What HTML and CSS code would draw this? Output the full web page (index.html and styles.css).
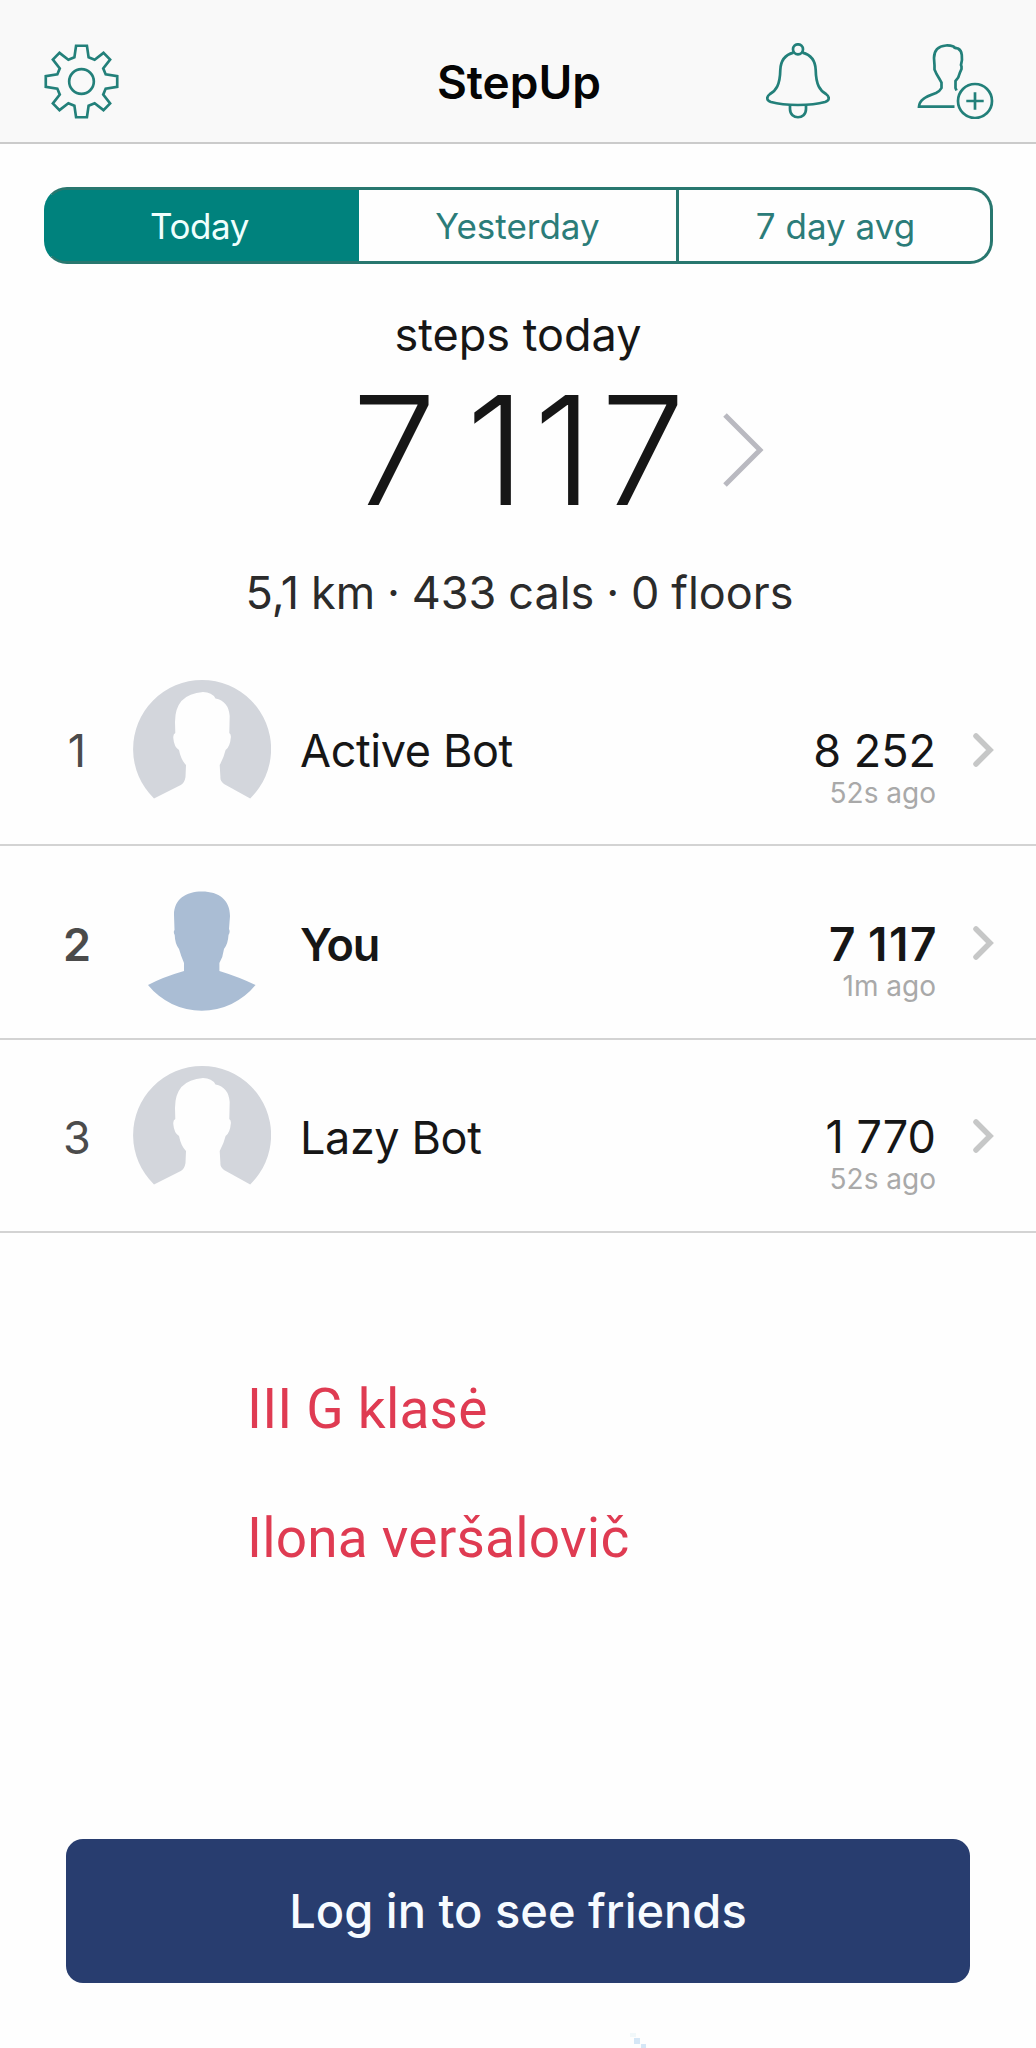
FILE: index.html
```
<!DOCTYPE html>
<html lang="en">
<head>
    <meta charset="UTF-8">
    <meta name="viewport" content="width=device-width, initial-scale=1.0">
    <title>StepUp</title>
    <link rel="stylesheet" href="styles.css">
</head>
<body>

<svg class="defs" width="0" height="0">
    <symbol id="bot" viewBox="0 0 138 138">
        <path d="M21 118.5 A69 69 0 1 1 117.2 118.5 L91 104 Q87 101 87.4 97 L86.7 85 Q91 77 92.6 70 Q97 67 97.9 57 Q98 54 96.3 53 L96.7 36 Q95.5 21 82.5 18.5 Q79 12 70 12 Q42 14 42 42 L42.3 53 Q40 54 40.3 58 Q41 67 46 70 Q48 80 53 85 L52.5 97 Q51.5 103 47.8 105 Z"/>
    </symbol>
    <symbol id="arrow" viewBox="0 0 24 38">
        <path d="M5 5 L19 19 L5 33"/>
    </symbol>
</svg>

<header class="topbar">
    <svg class="icon gear" viewBox="-38 -38 76 76">
        <path d="M-5.5 -36.2H5.5L7.2 -24.5L13.3 -22L22.3 -29L29 -22.3L22 -13.3L24.5 -7.2L36.2 -5.5V5.5L24.5 7.2L22 13.3L29 22.3L22.3 29L13.3 22L7.2 24.5L5.5 36.2H-5.5L-7.2 24.5L-13.3 22L-22.3 29L-29 22.3L-22 13.3L-24.5 7.2L-36.2 5.5V-5.5L-24.5 -7.2L-22 -13.3L-29 -22.3L-22.3 -29L-13.3 -22L-7.2 -24.5Z"/>
        <circle r="12.5"/>
    </svg>
    <h1>StepUp</h1>
    <div class="actions">
        <svg class="icon bell" viewBox="0 0 64 76">
            <circle cx="32" cy="6.3" r="5"/>
            <path d="M27.5 9.6C18 12 14.6 19 14.3 27C14 42 10 47.5 4 51C0 54 .5 57.5 5 59C19 63 45 63 59 59C63.5 57.5 64 54 60 51C54 47.5 50 42 49.7 27C49.4 19 46 12 36.5 9.6"/>
            <path d="M24 62V66C24 77 40 77 40 66V62"/>
        </svg>
        <svg class="icon person" viewBox="0 0 77 76">
            <path d="M39.5 47.5L38.5 45V38Q42 34.5 42.8 30L44.5 26V23.5L44 22Q45.5 17 44.8 12Q44.5 7.5 41 5.5Q37 5 36.5 3.5Q33 2.3 29 2.5Q17 3.5 17 15L17.5 22.5V26.5L19.5 31L22.5 36L24.5 39.5V45Q23 48 19 50Q9 53.5 6.3 56Q2.3 59 2 63.7H37.5"/>
            <circle cx="58" cy="58" r="17"/>
            <path d="M49.3 58H66.7M58 49.3V66.7"/>
        </svg>
    </div>
</header>

<nav class="tabs">
    <button class="tab active">Today</button>
    <button class="tab">Yesterday</button>
    <button class="tab">7 day avg</button>
</nav>

<section class="summary">
    <p class="label">steps today</p>
    <div class="count">
        <span class="steps">7 117</span>
        <svg class="more" viewBox="0 0 44 76"><path d="M3 3L38 38L3 73"/></svg>
    </div>
    <p class="stats">5,1 km · 433 cals · 0 floors</p>
</section>

<ul class="board">
    <li class="row">
        <span class="rank">1</span>
        <svg class="avatar"><use href="#bot"/></svg>
        <span class="name">Active Bot</span>
        <div class="score"><b>8 252</b><small>52s ago</small></div>
        <svg class="arrow"><use href="#arrow"/></svg>
    </li>
    <li class="row you">
        <span class="rank">2</span>
        <svg class="avatar" viewBox="0 0 138 138">
            <path d="M15 112Q30 104 51 98V90Q48 83 46 76Q42 71 41.7 62Q40 59 41.5 57L41 42C41 26 53 18.5 69 18.5C86 18.5 97 27 97 43L96 56Q97.5 59 95.5 62Q95 71 91 76Q90 84 86.4 90V98Q106 104 122.5 112A69 69 0 0 1 15 112Z"/>
        </svg>
        <span class="name">You</span>
        <div class="score"><b>7 117</b><small>1m ago</small></div>
        <svg class="arrow"><use href="#arrow"/></svg>
    </li>
    <li class="row">
        <span class="rank">3</span>
        <svg class="avatar"><use href="#bot"/></svg>
        <span class="name">Lazy Bot</span>
        <div class="score"><b>1 770</b><small>52s ago</small></div>
        <svg class="arrow"><use href="#arrow"/></svg>
    </li>
</ul>

<div class="note">
    <p>III G klasė</p>
    <p>Ilona veršalovič</p>
</div>

<button class="login">Log in to see friends</button>

<svg class="spark" viewBox="0 0 20 16">
    <path class="faint" d="M1 1h6v4h-6z"/>
    <path d="M5 6h6v6h-6zM12 12h5v4h-5z"/>
</svg>

</body>
</html>
```

FILE: styles.css
```
* {
    box-sizing: border-box;
}

body {
    margin: 0;
    width: 1036px;
    height: 2048px;
    overflow: hidden;
    display: flex;
    flex-direction: column;
    background: #fefefe;
    color: #161616;
    font-family: Inter, "Liberation Sans", sans-serif;
    font-size: 45px;
}

h1, p, ul {
    margin: 0;
    padding: 0;
    font-weight: 400;
}

button {
    border: none;
    padding: 0;
    background: none;
    font-family: inherit;
}

.defs {
    position: absolute;
}

/* top bar */
.topbar {
    height: 144px;
    flex: none;
    display: grid;
    grid-template-columns: 1fr auto 1fr;
    align-items: center;
    padding: 20px 42px 0 44px;
    background: #f9f9f9;
    border-bottom: 2px solid #cbcbcb;
}

.topbar h1 {
    padding-top: 2px;
    font-size: 46px;
    font-weight: 600;
    line-height: 60px;
    color: #050505;
}

.icon {
    fill: none;
    stroke: #23807a;
    stroke-width: 2.7;
    display: block;
}

.gear {
    width: 75px;
    height: 75px;
}

.actions {
    display: flex;
    justify-content: flex-end;
    gap: 87px;
}

.bell {
    width: 64px;
    height: 76px;
}

.person {
    width: 77px;
    height: 76px;
}

/* tabs */
.tabs {
    flex: none;
    display: grid;
    grid-template-columns: 312px 317px 1fr;
    height: 77px;
    margin: 43px 43px 0 44px;
    border: 3px solid #28776f;
    border-left-color: #00827d;
    border-radius: 23px;
    background: linear-gradient(to right, #00827d 50px, #fefefe 50px);
}

.tab {
    font-size: 35px;
    color: #2b7c79;
}

.tab + .tab + .tab {
    padding-left: 2px;
    border-left: 3px solid #28776f;
}

.tab.active {
    padding-right: 7px;
    background: #00827d;
    border-radius: 19px 0 0 19px;
    color: #effffd;
    letter-spacing: -0.4px;
}

/* summary */
.summary {
    flex: none;
    height: 389px;
    text-align: center;
}

.label {
    margin-top: 41px;
    line-height: 60px;
}

.count {
    display: flex;
    align-items: center;
    height: 150px;
    margin-top: 10px;
    padding-left: 352px;
}

.steps {
    width: 340px;
    text-align: center;
    font-size: 151px;
    font-weight: 300;
    line-height: 150px;
    letter-spacing: 8px;
    word-spacing: -29px;
    white-space: nowrap;
}

.more {
    width: 44px;
    height: 76px;
    margin-left: 30px;
    fill: none;
    stroke: #b9b9c0;
    stroke-width: 5;
}

.stats {
    margin-top: 38px;
    padding-left: 3px;
    line-height: 60px;
    word-spacing: -0.8px;
    color: #2b2b2b;
}

/* leaderboard */
.board {
    flex: none;
    list-style: none;
}

.row {
    display: flex;
    align-items: center;
    height: 193.4px;
    padding-left: 48px;
    border-bottom: 2px solid #d3d3d3;
}

.rank {
    width: 58px;
    padding-top: 4px;
    text-align: center;
    color: #4b4b4b;
}

.avatar {
    width: 138px;
    height: 138px;
    margin-left: 27px;
    overflow: visible;
    fill: #d3d6dc;
}

.name {
    flex: 1;
    margin-left: 29px;
    padding-top: 4px;
    letter-spacing: -0.4px;
}

.score {
    display: flex;
    flex-direction: column;
    align-items: flex-end;
    height: 91px;
    margin-top: 41px;
}

.score b {
    font-weight: 400;
    line-height: 54px;
}

.score small {
    font-size: 28px;
    line-height: 30px;
    color: #a9a9a9;
}

.arrow {
    width: 24px;
    height: 38px;
    margin: 2px 41px 0 35px;
    fill: none;
    stroke: #c6c7c7;
    stroke-width: 5.5;
    stroke-linecap: round;
}

.you .rank,
.you .name,
.you b {
    font-weight: 600;
}

.you .name {
    letter-spacing: -1.2px;
}

.you b {
    margin-right: -2px;
    font-size: 46px;
    letter-spacing: 1.5px;
    word-spacing: -2px;
}

.you .avatar {
    fill: #aabdd4;
}

/* class and student name */
.note {
    flex: none;
    margin: 144px 0 0 247px;
    font-family: Roboto, sans-serif;
    font-size: 55px;
    line-height: 64px;
    letter-spacing: 0.2px;
    color: #df3b52;
}

.note p + p {
    margin-top: 65px;
}

.login {
    flex: none;
    width: 904px;
    height: 144px;
    margin: 269px 0 0 66px;
    padding-bottom: 2px;
    border-radius: 17px;
    background: #283d6f;
    color: #f7fbff;
    font-size: 47px;
    font-weight: 500;
}

.spark {
    flex: none;
    width: 20px;
    height: 16px;
    margin: 49px 0 0 629px;
    fill: #d5e7f6;
}

.faint {
    fill: #f1f8fa;
}
```
